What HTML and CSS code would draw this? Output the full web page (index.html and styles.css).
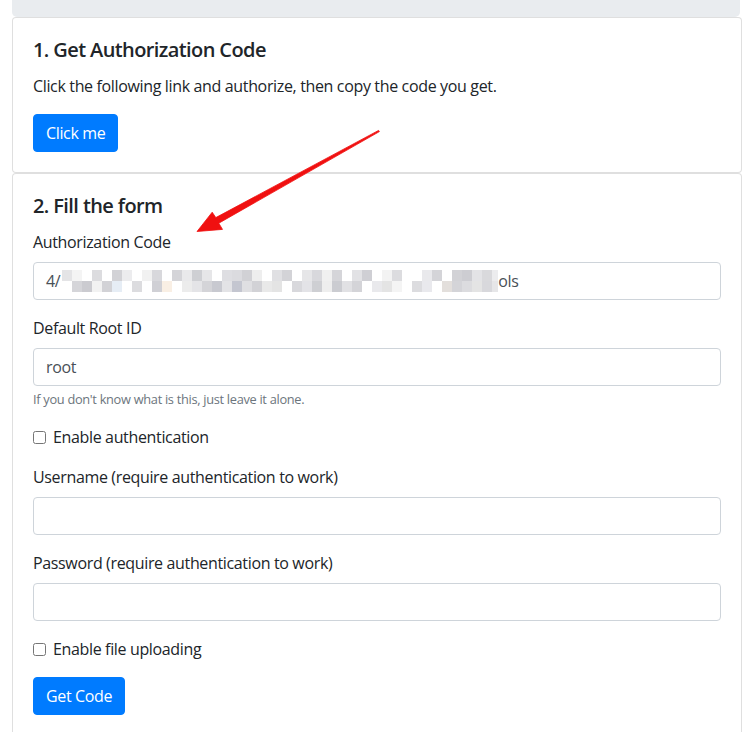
FILE: index.html
```html
<!DOCTYPE html>
<html lang="en">
<head>
<meta charset="utf-8">
<title>Get Authorization Code</title>
<link rel="stylesheet" href="styles.css">
</head>
<body>
<div class="page">
  <div class="jumbo"></div>
  <div class="card">
    <div class="card-body">
      <h5 class="card-title">1. Get Authorization Code</h5>
      <p class="card-text">Click the following link and authorize, then copy the code you get.</p>
      <a class="btn" href="#">Click me</a>
    </div>
  </div>
  <div class="card">
    <div class="card-body">
      <h5 class="card-title">2. Fill the form</h5>
      <form>
        <div class="form-group">
          <label class="label">Authorization Code</label>
          <div class="form-control code">
            <span>4/</span>
            <span class="pix"></span>
            <span>ols</span>
          </div>
        </div>
        <div class="form-group">
          <label class="label">Default Root ID</label>
          <div class="form-control">root</div>
          <small class="help">If you don't know what is this, just leave it alone.</small>
        </div>
        <div class="form-group check">
          <input type="checkbox" id="auth">
          <label for="auth">Enable authentication</label>
        </div>
        <div class="form-group">
          <label class="label">Username (require authentication to work)</label>
          <div class="form-control"></div>
        </div>
        <div class="form-group">
          <label class="label">Password (require authentication to work)</label>
          <div class="form-control"></div>
        </div>
        <div class="form-group check">
          <input type="checkbox" id="upload">
          <label for="upload">Enable file uploading</label>
        </div>
        <a class="btn" href="#">Get Code</a>
      </form>
    </div>
  </div>
  <svg class="arrow" width="744" height="732" viewBox="0 0 744 732">
    <polygon points="379.4,131.6 218.8,223.2 222.5,229.4 197,231.5 212.2,212.2 215.8,217.6 378.6,130.4" fill="#f01010" stroke="#f01010" stroke-width="0.8" stroke-linejoin="round"/>
  </svg>
</div>
</body>
</html>
```

FILE: styles.css
```css
* { box-sizing: border-box; }
html, body { margin: 0; padding: 0; background: #fff; }
body {
  font-family: "Open Sans", "Noto Sans", "Liberation Sans", sans-serif;
  font-size: 16px;
  line-height: 1.5;
  letter-spacing: -0.35px;
  color: #212529;
}
.page {
  position: relative;
  padding: 0 2px 0 12px;
  width: 744px;
  height: 732px;
  overflow: hidden;
}
.jumbo {
  height: 17px;
  background: #e9ecef;
  border-radius: 0 0 5px 5px;
  margin-right: 2px;
}
.card {
  border: 1px solid rgba(0,0,0,.125);
  border-radius: 4px;
  background: #fff;
}
.card-body { padding: 20px; }
.card-title {
  font-size: 20px;
  font-weight: 600;
  line-height: 1.2;
  letter-spacing: -0.6px;
  margin: 0 0 12px;
}
.card-text { margin: 0 0 16px; }
.btn {
  display: inline-block;
  background: #007bff;
  color: #fff;
  text-decoration: none;
  padding: 6px 12px;
  line-height: 24px;
  font-size: 16px;
  border: 1px solid #007bff;
  border-radius: 4px;
}
form { margin: 0; }
.form-group { margin-bottom: 16px; }
.label { display: block; margin-bottom: 8px; }
.form-control {
  height: 38px;
  padding: 6px 12px;
  border: 1px solid #ced4da;
  border-radius: 4px;
  color: #495057;
  line-height: 24px;
  background: #fff;
}
.code { display: flex; align-items: center; }
.pix {
  display: block;
  width: 436px;
  height: 22px;
  margin: 0 0 0 2px;
  background-repeat: no-repeat;
  background-size: 436px 11px, 436px 11px;
  background-position: 0 0, 0 11px;
  background-image:
    linear-gradient(to right,
      #e4e4e6 0 10px, #f4f4f4 10px 20px, #ffffff 20px 30px, #dcdcdf 30px 40px, #ffffff 40px 50px,
      #d2d2d6 50px 60px, #ececee 60px 70px, #ffffff 70px 80px, #f1f1f1 80px 90px, #d8d8dc 90px 100px,
      #ffffff 100px 110px, #d4d4d8 110px 120px, #e9e9eb 120px 130px, #cecfd3 130px 140px, #e6e6e8 140px 150px,
      #ffffff 150px 160px, #dedee2 160px 170px, #dbdbdf 170px 180px, #d1d1d5 180px 190px, #eeeeee 190px 200px,
      #ffffff 200px 210px, #e0e0e3 210px 220px, #d3d3d7 220px 230px, #ffffff 230px 240px, #e6e6e8 240px 250px,
      #d8d8dc 250px 260px, #f0f0f0 260px 270px, #d5d5d9 270px 280px, #ffffff 280px 290px, #e2e2e5 290px 300px,
      #cfcfd4 300px 310px, #ffffff 310px 320px, #f3f3f3 320px 330px, #dcdcdf 330px 340px, #ffffff 340px 350px,
      #ffffff 350px 360px, #e9e9ec 360px 370px, #d4d4d8 370px 380px, #ffffff 380px 390px, #d2d2d6 390px 400px,
      #cdcdd2 400px 410px, #e3e3e6 410px 420px, #d9d9dc 420px 430px, #ececee 430px 436px),
    linear-gradient(to right,
      #ffffff 0 10px, #d5d5d9 10px 20px, #cbcbd0 20px 30px, #f2f2f2 30px 40px, #d2d2d6 40px 50px,
      #e6edf5 50px 60px, #ffffff 60px 70px, #dcdcdf 70px 80px, #ffffff 80px 90px, #d0d0d5 90px 100px,
      #f9efe4 100px 110px, #ffffff 110px 120px, #ececec 120px 130px, #e4e4e7 130px 140px, #d4d4d8 140px 150px,
      #c8c9d0 150px 160px, #e3e3e6 160px 170px, #c4c6d0 170px 180px, #dfdfe2 180px 190px, #d2d2d6 190px 200px,
      #e9e9e9 200px 210px, #e4e4e4 210px 220px, #ffffff 220px 230px, #d8d8dc 230px 240px, #e3e3e7 240px 250px,
      #cecfd3 250px 260px, #eeeeee 260px 270px, #cbccd1 270px 280px, #e1e1e4 280px 290px, #d4d4d8 290px 300px,
      #ffffff 300px 310px, #e9e9ec 310px 320px, #e4e4e4 320px 330px, #f4f4f4 330px 340px, #ffffff 340px 350px,
      #dcdcdf 350px 360px, #e9e9ed 360px 370px, #ffffff 370px 380px, #e3dfdc 380px 390px, #d4d4d8 390px 400px,
      #dcdcdf 400px 410px, #e4e4e4 410px 420px, #d8d8dc 420px 430px, #e6e6e8 430px 436px);
}
.help {
  display: block;
  margin-top: 4px;
  font-size: 12.8px;
  letter-spacing: -0.3px;
  color: #6c757d;
  line-height: 1.5;
}
.check {
  display: flex;
  align-items: center;
  height: 24px;
}
.check input {
  margin: 0 7px 0 0;
  width: 13px;
  height: 13px;
}
.arrow {
  position: absolute;
  left: 0;
  top: 0;
  pointer-events: none;
}
```
